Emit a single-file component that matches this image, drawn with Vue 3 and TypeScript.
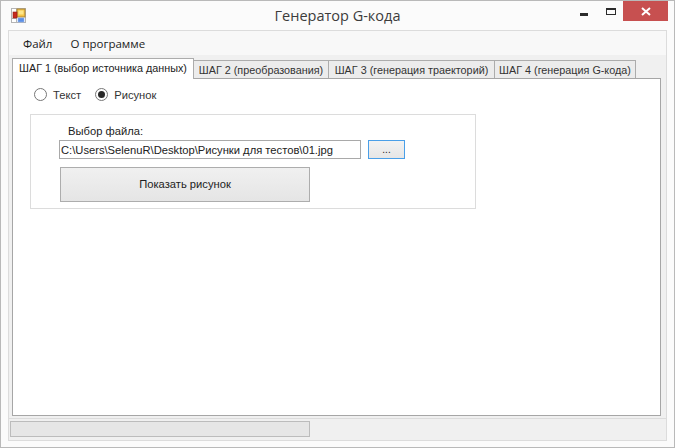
<script setup lang="ts">
const tabs: string[] = [
  'ШАГ 1 (выбор источника данных)',
  'ШАГ 2 (преобразования)',
  'ШАГ 3 (генерация траекторий)',
  'ШАГ 4 (генерация G-кода)'
]
const tabWidths: number[] = [182, 135, 166, 141]
</script>

<template>
  <div class="window">
    <header class="titlebar">
      <div class="app-icon">
        <svg width="15" height="15" viewBox="0 0 15 15">
          <rect x="0.5" y="0.5" width="14" height="14" fill="#fff" stroke="#b4b4b4" />
          <line x1="0" y1="10.5" x2="5" y2="10.5" stroke="#b4b4b4" />
          <line x1="5.5" y1="0" x2="5.5" y2="15" stroke="#b4b4b4" />
          <rect x="6" y="1" width="8" height="8" fill="#f6c445" stroke="#a8843a" />
          <rect x="7.5" y="2.5" width="5" height="4" fill="#fde68a" />
          <rect x="2" y="4" width="4" height="6" fill="#c62a1e" stroke="#8f2019" stroke-width="0.6" />
          <rect x="7" y="10" width="6" height="4" fill="#5b8fe6" stroke="#8fb2ea" stroke-width="0.6" />
        </svg>
      </div>
      <div class="title">Генератор G-кода</div>
      <div class="controls">
        <span class="ctl-min"></span>
        <span class="ctl-max"></span>
        <span class="ctl-close">
          <svg width="10" height="9" viewBox="0 0 10 9">
            <path d="M1 1L9 8M9 1L1 8" stroke="#fff" stroke-width="2" fill="none" />
          </svg>
        </span>
      </div>
    </header>

    <div class="client">
      <nav class="menubar">
        <span class="menu-item">Файл</span>
        <span class="menu-item">О программе</span>
      </nav>

      <div class="body">
        <div class="tabstrip">
          <div
            v-for="(t, i) in tabs"
            :key="t"
            class="tab"
            :class="{ active: i === 0 }"
            :style="{ width: tabWidths[i] + 'px' }"
          >{{ t }}</div>
        </div>

        <section class="page">
          <div class="radios">
            <label class="radio"><span class="dot"></span>Текст</label>
            <label class="radio"><span class="dot on"></span>Рисунок</label>
          </div>

          <div class="group">
            <div class="file-label">Выбор файла:</div>
            <div class="file-row">
              <div class="input">C:\Users\SelenuR\Desktop\Рисунки для тестов\01.jpg</div>
              <div class="browse">...</div>
            </div>
            <div class="show">Показать рисунок</div>
          </div>
        </section>

        <footer class="status">
          <div class="progress"></div>
        </footer>
      </div>
    </div>
  </div>
</template>

<style>
html, body { margin: 0; padding: 0; background: #fbfbfb; }
</style>

<style scoped>
.window {
  width: 675px;
  height: 448px;
  box-sizing: border-box;
  border: 1px solid #b9b9b9;
  background: #fbfbfb;
  display: flex;
  flex-direction: column;
  font-family: "Liberation Sans", Arial, sans-serif;
  font-size: 11.2px;
  color: #222;
  overflow: hidden;
}
.titlebar {
  height: 29px;
  flex: none;
  display: grid;
  grid-template-columns: 1fr auto 1fr;
  align-items: start;
}
.app-icon { padding: 7px 0 0 10px; line-height: 0; }
.title {
  font-family: "Open Sans", sans-serif;
  font-size: 14.5px;
  line-height: 20px;
  padding-top: 5px;
  color: #3c3c3c;
}
.controls { display: flex; justify-content: flex-end; padding-right: 6px; }
.ctl-min {
  width: 8px;
  height: 3px;
  background: #2b2b2b;
  margin-top: 12px;
  margin-right: 18px;
}
.ctl-max {
  box-sizing: content-box;
  width: 8px;
  height: 4px;
  border: 1px solid #2b2b2b;
  border-top-width: 2px;
  margin-top: 7px;
  margin-right: 7px;
}
.ctl-close {
  width: 45px;
  height: 20px;
  background: #c75050;
  display: flex;
  align-items: center;
  justify-content: center;
}
.client {
  flex: 1;
  margin: 0 7px 6px 7px;
  border: 1px solid #dcdcdc;
  background: #f0f0f0;
  display: flex;
  flex-direction: column;
  min-height: 0;
}
.menubar {
  height: 24px;
  flex: none;
  display: flex;
  align-items: center;
  padding-left: 6px;
  background: #f8f8f8;
  font-family: "Open Sans", sans-serif;
  font-size: 11.5px;
  color: #1c1c1c;
}
.menu-item { padding: 0 7px 0 8px; margin-right: 3px; }
.body {
  flex: 1;
  display: flex;
  flex-direction: column;
  padding: 3px 5px 0 3px;
  min-height: 0;
}
.tabstrip {
  display: flex;
  align-items: flex-end;
  height: 20px;
  flex: none;
  position: relative;
  z-index: 1;
}
.tab {
  box-sizing: border-box;
  height: 18px;
  border: 1px solid #acacac;
  border-left-width: 0;
  border-bottom: 0;
  background: #ececec;
  font-size: 10.8px;
  line-height: 19px;
  text-align: center;
  white-space: nowrap;
  color: #333;
}
.tab.active {
  height: 21px;
  margin-bottom: -1px;
  border-left-width: 1px;
  background: #fff;
  line-height: 18px;
  color: #222;
}
.page {
  flex: 1;
  border: 1px solid #a6a6a6;
  background: #fff;
  min-height: 0;
  display: flex;
  flex-direction: column;
  padding-left: 17px;
}
.radios {
  display: flex;
  padding: 9px 0 0 4px;
  height: 27px;
  box-sizing: border-box;
  flex: none;
}
.radio {
  display: flex;
  align-items: center;
  gap: 6px;
  height: 13px;
  margin-right: 14px;
  color: #333;
}
.dot {
  width: 11px;
  height: 11px;
  border: 1px solid #777;
  border-radius: 50%;
  background: #fff;
  display: flex;
  align-items: center;
  justify-content: center;
  flex: none;
}
.dot.on::after {
  content: "";
  width: 7px;
  height: 7px;
  border-radius: 50%;
  background: #2a2a2a;
}
.group {
  margin-top: 8px;
  width: 446px;
  height: 95px;
  box-sizing: border-box;
  border: 1px solid #dcdcdc;
  padding: 9px 0 0 28px;
}
.file-label { height: 16px; line-height: 15px; padding-left: 9px; }
.file-row { display: flex; gap: 7px; }
.input {
  box-sizing: border-box;
  width: 302px;
  height: 19px;
  border: 1px solid #a9a9a9;
  line-height: 18px;
  padding-left: 1px;
  white-space: nowrap;
  background: #fff;
  color: #222;
}
.browse {
  box-sizing: border-box;
  width: 37px;
  height: 19px;
  border: 1px solid #4a9fe8;
  background: linear-gradient(#f2f2f2, #e6e6e6);
  text-align: center;
  line-height: 17px;
  font-size: 10px;
}
.show {
  box-sizing: border-box;
  margin: 8px 0 0 1px;
  width: 250px;
  height: 35px;
  border: 1px solid #adadad;
  background: linear-gradient(#f0f0f0, #e5e5e5);
  text-align: center;
  line-height: 33px;
}
.status {
  flex: none;
  height: 22px;
  margin: 2px -5px 0 -3px;
  border-top: 1px solid #dcdcdc;
  padding: 2px 0 0 1px;
  box-sizing: border-box;
}
.progress {
  box-sizing: border-box;
  width: 300px;
  height: 16px;
  border: 1px solid #bcbcbc;
  background: #e6e6e6;
}
</style>
